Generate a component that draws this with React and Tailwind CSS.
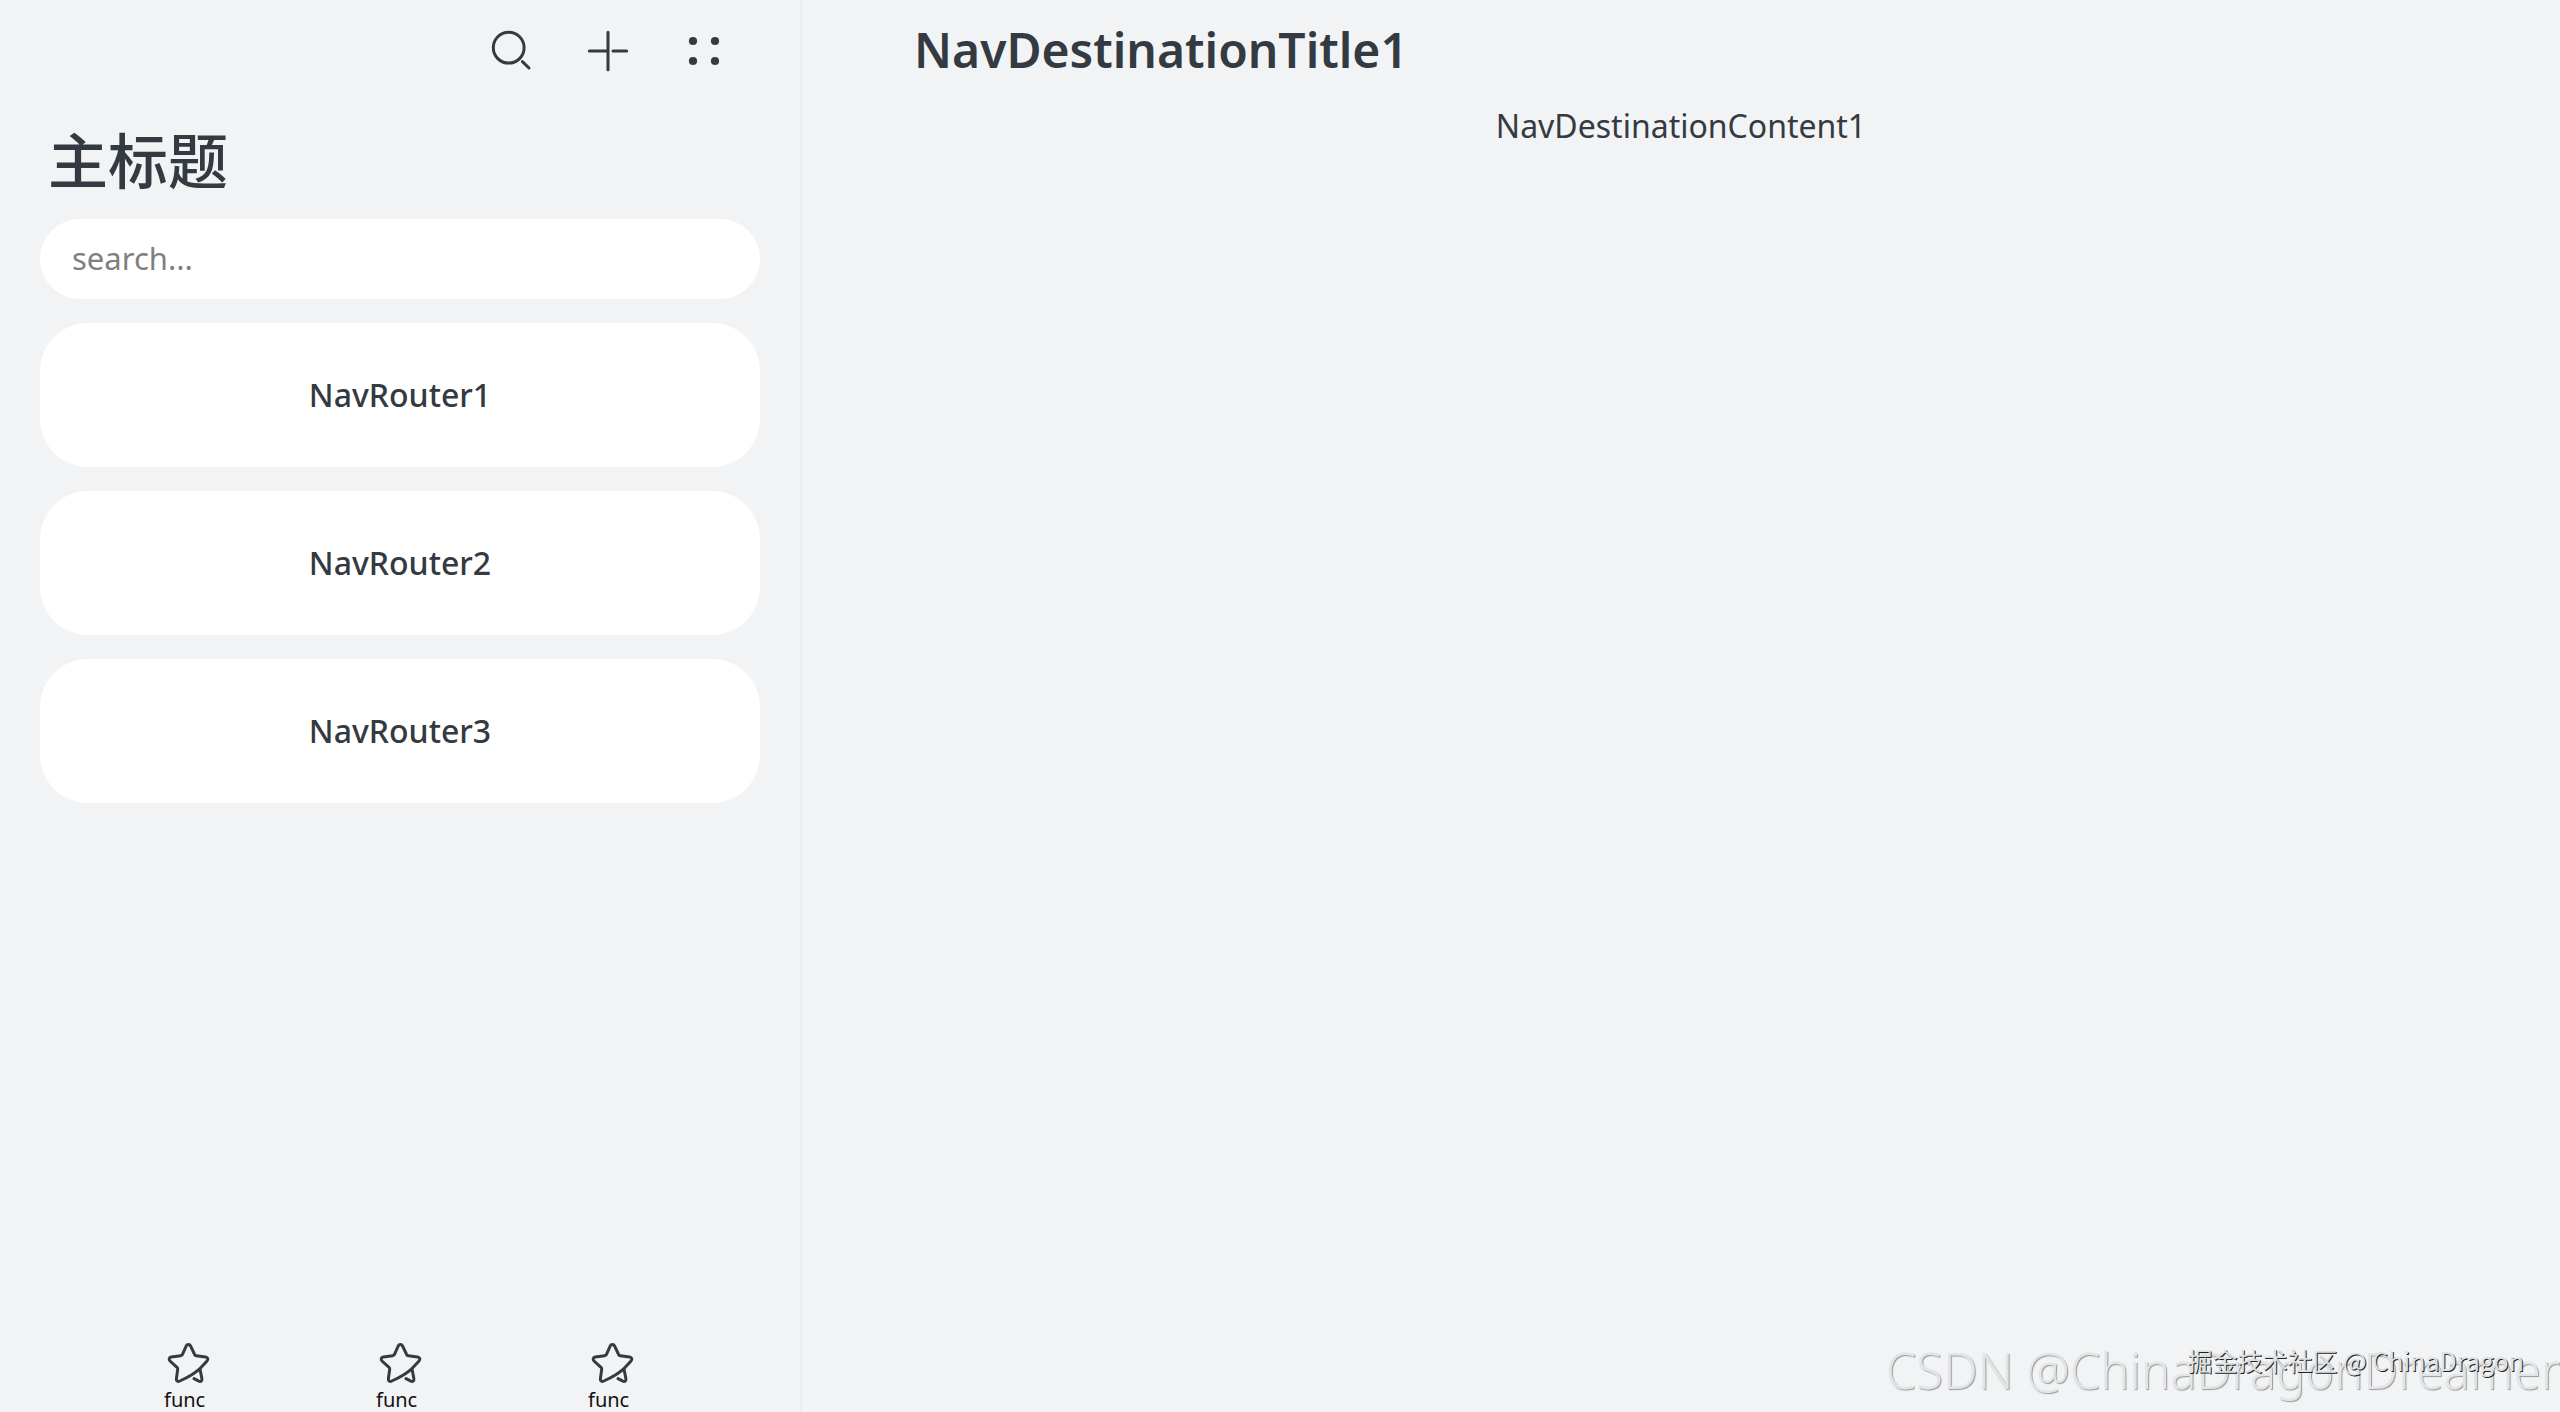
const navRouters = ['NavRouter1', 'NavRouter2', 'NavRouter3'];
const tools = ['func', 'func', 'func'];

const SearchIcon = () => (
  <svg viewBox="0 0 48 48" className="h-12 w-12" fill="none" stroke="currentColor" strokeWidth="3" strokeLinecap="round">
    <circle cx="20.7" cy="20.7" r="15.4" />
    <path d="M34.4 34.6 L41 41" />
  </svg>
);

const PlusIcon = () => (
  <svg viewBox="0 0 48 48" className="h-12 w-12" fill="none" stroke="currentColor" strokeWidth="3" strokeLinecap="round">
    <path d="M24 5.3 V42.7" />
    <path d="M5.3 24 H23" />
    <path d="M29 24 H42.7" />
  </svg>
);

const MoreIcon = () => (
  <svg viewBox="0 0 48 48" className="h-12 w-12" fill="currentColor">
    <circle cx="13" cy="14" r="4.1" />
    <circle cx="35" cy="14" r="4.1" />
    <circle cx="13" cy="34" r="4.1" />
    <circle cx="35" cy="34" r="4.1" />
  </svg>
);

const StarIcon = () => (
  <svg
    viewBox="0 0 48 48"
    className="h-12 w-12"
    fill="none"
    stroke="currentColor"
    strokeWidth="3"
    strokeLinecap="round"
    strokeLinejoin="round"
  >
    <path d="M36 29.6 L42.8 22.3 C44.6 20.6 44 18.4 41.6 18 L32.4 16.8 C31.6 16.7 31 16.3 30.7 15.6 L26.6 7 C25.6 4.9 23.2 4.9 22.2 7 L18.4 15.6 C18 16.3 17.4 16.7 16.7 16.8 L7.2 18 C5.1 18.3 4.5 20.5 6 22 L13 28.4 C13.6 29 13.8 29.6 13.7 30.4 L12.4 39.6 C12.1 42 13.8 43 15.8 42 C23.5 38.6 30 35 36 29.6 Z" />
    <path d="M36 30 L37.9 39.8 C38.2 42 36.7 43 34.9 42.2 L30 39.6" />
  </svg>
);

const Sidebar = () => (
  <aside className="flex w-[802px] shrink-0 flex-col border-r-2 border-[#ebedef]">
    <div className="flex h-[102px] items-center justify-end gap-12 pr-[72px]">
      <button aria-label="Search">
        <SearchIcon />
      </button>
      <button aria-label="Add">
        <PlusIcon />
      </button>
      <button aria-label="More">
        <MoreIcon />
      </button>
    </div>

    <h1 className="flex h-[117px] items-center px-12 text-[60px] font-medium">主标题</h1>

    <div className="flex flex-col gap-6 px-10">
      <input
        type="text"
        aria-label="Search"
        placeholder="search..."
        className="h-20 w-full rounded-full bg-white px-8 pb-0.5 text-[31px] outline-none placeholder:text-[#808080]"
      />
      {navRouters.map((name) => (
        <button
          key={name}
          className="h-36 w-full rounded-[48px] bg-white text-[32px] font-medium"
        >
          {name}
        </button>
      ))}
    </div>

    <div className="mt-auto flex justify-center gap-[164px]">
      {tools.map((label, i) => (
        <button key={i} className="flex w-12 flex-col items-start">
          <StarIcon />
          <span className="text-[20px] leading-[25px] text-[#111111]">{label}</span>
        </button>
      ))}
    </div>
  </aside>
);

const Destination = () => (
  <main className="flex grow flex-col">
    <h2 className="flex h-[100px] items-center pl-[112px] text-[48px] font-semibold">NavDestinationTitle1</h2>
    <p className="text-center text-[32px] leading-[52px]">NavDestinationContent1</p>
  </main>
);

const Watermarks = () => (
  <div className="pointer-events-none whitespace-nowrap">
    <span className="absolute right-0 bottom-2 text-[49px] leading-[68px] font-light text-[#e3e4e5] [text-shadow:1px_1px_1px_#999999]">
      CSDN @ChinaDragonDreamer
    </span>
    <span className="absolute right-9 bottom-[34px] font-['Noto_Sans_CJK_SC',sans-serif] text-[25px] leading-9 text-[#dfe0e1] [text-shadow:1px_1px_0_#222222]">
      掘金技术社区 @ ChinaDragon
    </span>
  </div>
);

const App = () => (
  <div className="relative flex min-h-screen overflow-hidden bg-[#f1f3f5] font-['Noto_Sans','Noto_Sans_CJK_SC',sans-serif] text-[#343a41]">
    <Sidebar />
    <Destination />
    <Watermarks />
  </div>
);

export default App;
